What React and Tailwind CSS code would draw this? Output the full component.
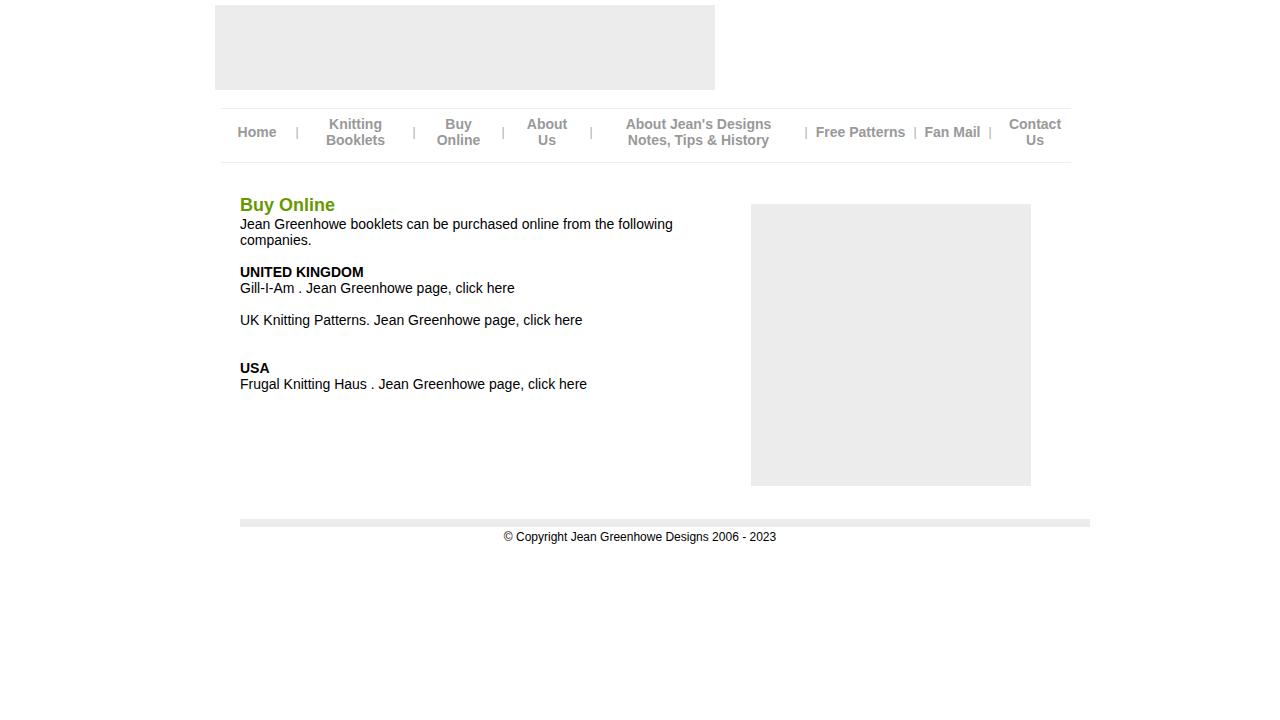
export default function App() {
  const navItem = "flex shrink-0 items-center justify-center text-center text-[14px] font-bold leading-[16px] text-[#999999]";
  const sep = "flex w-[8px] shrink-0 items-center justify-center text-[12px] text-[#aaaaaa]";
  return (
    <div className="min-h-[720px] bg-white font-['Liberation_Sans',Arial,sans-serif] text-black">
      <div className="mx-auto w-[850px] pt-[5px]">
        <div className="h-[85px] w-[500px] bg-[#ececec]" />
        <div className="ml-[6px] mt-[18px] flex h-[55px] w-[850px] border-y border-[#eeeeee] pb-[8px]">
          <div className={`${navItem} w-[72px]`}>Home</div>
          <div className={sep}>|</div>
          <div className={`${navItem} w-[109px]`}>Knitting<br />Booklets</div>
          <div className={sep}>|</div>
          <div className={`${navItem} w-[81px]`}>Buy<br />Online</div>
          <div className={sep}>|</div>
          <div className={`${navItem} w-[80px]`}>About<br />Us</div>
          <div className={sep}>|</div>
          <div className={`${navItem} w-[207px]`}>About Jean's Designs<br />Notes, Tips &amp; History</div>
          <div className={sep}>|</div>
          <div className={`${navItem} w-[101px]`}>Free Patterns</div>
          <div className={sep}>|</div>
          <div className={`${navItem} w-[67px]`}>Fan Mail</div>
          <div className={sep}>|</div>
          <div className={`${navItem} w-[77px] pl-[5px]`}>Contact<br />Us</div>
        </div>
        <div className="ml-[25px] mt-[32px] flex">
          <div className="w-[480px] text-[14px] leading-[16px]">
            <h1 className="text-[18px] font-bold leading-[21px] text-[#669900]">Buy Online</h1>
            <p>Jean Greenhowe booklets can be purchased online from the following companies.</p>
            <p className="mt-[16px] font-bold">UNITED KINGDOM</p>
            <p>Gill-I-Am . Jean Greenhowe page, click here</p>
            <p className="mt-[16px]">UK Knitting Patterns. Jean Greenhowe page, click here</p>
            <p className="mt-[32px] font-bold">USA</p>
            <p>Frugal Knitting Haus . Jean Greenhowe page, click here</p>
          </div>
          <div className="ml-[31px] mt-[9px] h-[282px] w-[280px] bg-[#ececec]" />
        </div>
        <div className="ml-[25px] mt-[33px] h-[8px] w-[850px] bg-[#ececec]" />
        <div className="mt-[3px] text-center text-[12px] leading-[14px]">© Copyright Jean Greenhowe Designs 2006 - 2023</div>
      </div>
    </div>
  );
}
